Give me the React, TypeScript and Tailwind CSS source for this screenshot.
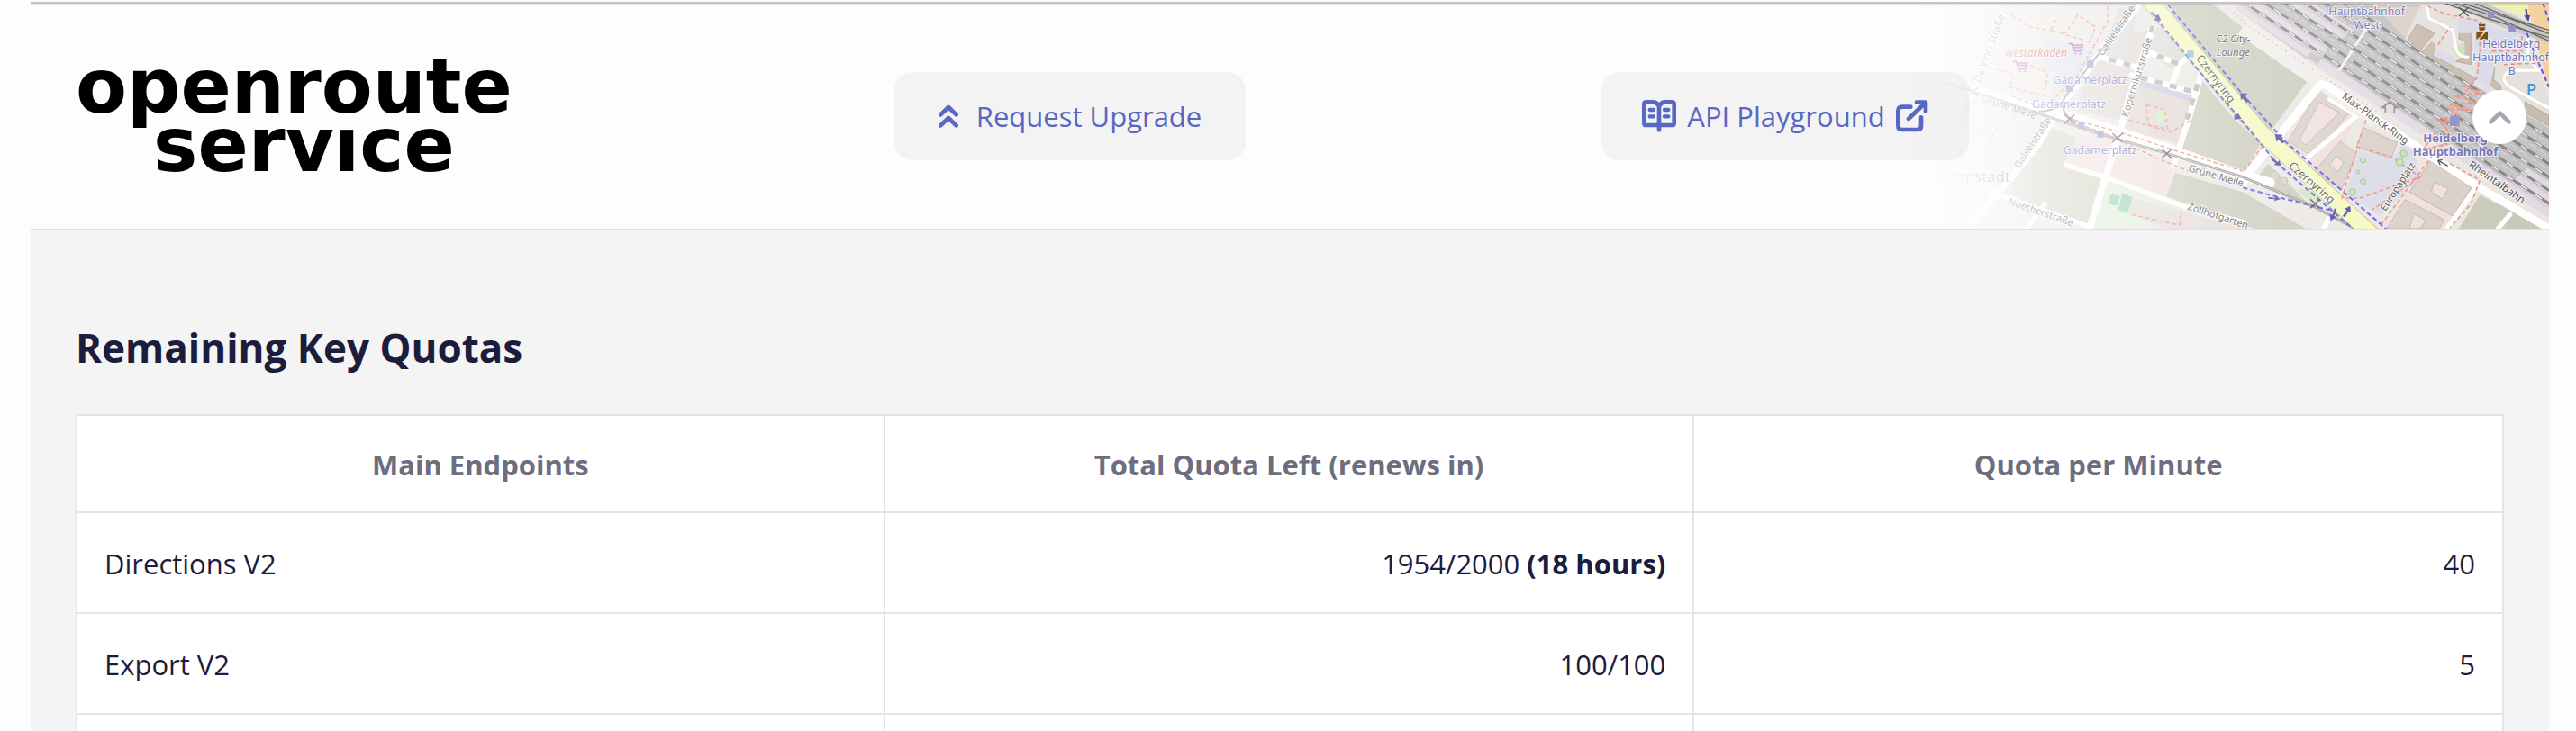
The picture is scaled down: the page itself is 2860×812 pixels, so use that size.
import React from "react";

type Label = { t: string; x: number; y: number; r?: number; c?: string; s?: number; b?: boolean; i?: boolean };

const GREY = "#4c4c4c";
const BLUE = "#6b70b8";

const labels: Label[] = [
  { t: "Westarkaden", x: 421, y: 190, c: "#c9443c", i: true, s: 36 },
  { t: "Gadamerplatz", x: 601, y: 279, c: "#6468c0", s: 37 },
  { t: "Gadamerplatz", x: 531, y: 359, c: "#6468c0", s: 37 },
  { t: "Gadamerplatz", x: 635, y: 513, c: "#6468c0", s: 37 },
  { t: "Da-Vinci-Straße", x: 276, y: 165, r: -70, s: 33 },
  { t: "Da-Vinci-Straße", x: 166, y: 450, r: -70, s: 33 },
  { t: "Galileistraße", x: 698, y: 108, r: -56, s: 33 },
  { t: "Galileistraße", x: 420, y: 482, r: -56, s: 33 },
  { t: "Kopernikusstraße", x: 768, y: 260, r: -73, s: 33 },
  { t: "Grüne Meile", x: 328, y: 367, r: 18, s: 33 },
  { t: "Grüne Meile", x: 1018, y: 596, r: 16, s: 33 },
  { t: "Noetherstraße", x: 434, y: 717, r: 19, s: 33 },
  { t: "Bahnstadt", x: 215, y: 606, c: "#666666", s: 50 },
  { t: "Zollhofgarten", x: 1024, y: 730, r: 18, s: 33 },
  { t: "Czernyring", x: 1010, y: 270, r: 53, s: 37 },
  { t: "C2 City-", x: 1078, y: 141, i: true, s: 34 },
  { t: "Lounge", x: 1078, y: 186, i: true, s: 34 },
  { t: "Hauptbahnhof", x: 1523, y: 51, c: BLUE, s: 37 },
  { t: "West", x: 1523, y: 95, c: BLUE, s: 37 },
  { t: "Heidelberg", x: 2005, y: 160, c: BLUE, s: 37 },
  { t: "Hauptbahnhof", x: 2003, y: 204, c: BLUE, s: 37 },
  { t: "B", x: 2006, y: 248, c: BLUE, s: 37 },
  { t: "Heidelberg", x: 1818, y: 473, c: BLUE, b: true, s: 39 },
  { t: "Hauptbahnhof", x: 1818, y: 519, c: BLUE, b: true, s: 39 },
  { t: "Max-Planck-Ring", x: 1545, y: 404, r: 36, s: 34 },
  { t: "Czernyring", x: 1332, y: 618, r: 41, s: 37 },
  { t: "Europaplatz", x: 1636, y: 628, r: -57, s: 33 },
  { t: "Rheintalbahn", x: 1950, y: 617, r: 35, s: 35 },
];

const tracks = [-76, -32, 12, 56, 100, 144];

const footpaths = [
  "M340 50L400 90L520 110L560 50L620 90L600 140L470 100L490 60",
  "M285 230L350 250L330 290L450 320L460 240L380 210",
  "M340 320L420 350M660 20V70L560 250L470 340",
  "M550 400L700 440L880 500L1110 570",
  "M520 400L640 440L830 530L930 570",
  "M730 400L870 440L940 400M790 350L850 365L860 430L795 415Z",
  "M255 500L290 430L310 400",
  "M740 715L850 740L900 750L905 700",
  "M1520 400L1490 490L1600 520L1700 590L1500 660L1440 660L1490 500",
  "M1700 590L1540 700M1570 750L1740 520M1800 545L1900 600L1870 680L1800 760",
  "M1725 20L1780 45L1900 70V170L1890 260L1840 320",
  "M1940 170L2040 170V120M1980 215L2100 210",
  "M1760 150L1800 90M1115 570L1180 480",
];

const crowds = "M1840 285L1910 310L1815 320L1890 340L1800 350L1880 370L1790 360L1830 385L1780 395L1830 420L1760 400L1800 440L1740 460L1790 480L1710 500L1760 430";

function MapPicture() {
  return (
    <svg viewBox="0 6 2130 756" className="h-full w-full" preserveAspectRatio="xMaxYMid slice" aria-hidden="true">
      <defs>
        <linearGradient id="fade" x1="0" x2="1" y1="0" y2="0">
          <stop offset="0" stopColor="#fdfdfd" />
          <stop offset="0.06" stopColor="#fdfdfd" stopOpacity="0.92" />
          <stop offset="0.28" stopColor="#fdfdfd" stopOpacity="0.54" />
          <stop offset="0.5" stopColor="#fdfdfd" stopOpacity="0.28" />
          <stop offset="0.75" stopColor="#fdfdfd" stopOpacity="0.1" />
          <stop offset="1" stopColor="#fdfdfd" stopOpacity="0" />
        </linearGradient>
        <linearGradient id="edge" x1="0" x2="1" y1="0" y2="0">
          <stop offset="0" stopColor="#fdfdfd" />
          <stop offset="0.16" stopColor="#fdfdfd" stopOpacity="0.3" />
          <stop offset="0.3" stopColor="#fdfdfd" stopOpacity="0" />
        </linearGradient>
        <clipPath id="yard">
          <path d="M1080 6H1540L1650 130L1820 250L2130 425V725L1740 470L1320 195L1090 30Z" />
        </clipPath>
      </defs>
      <rect y="0" width="2130" height="770" fill="#eae6e2" />

      {/* open ground */}
      <g fill="#c9c9b9">
        <path d="M870 6H1000L1330 265L1170 480L1075 330L880 120Z" />
        <path d="M960 250L1075 390L1170 480L1115 570L900 500Z" />
        <path d="M470 425L560 460L510 550L640 590L590 750L310 640Z" fill="#d0d0c0" />
        <path d="M885 575L1110 640L1320 762H1150L855 655Z" />
        <path d="M1195 545L1330 680L1150 600Z" />
        <path d="M1900 650L2130 762H1830Z" />
      </g>
      <path d="M700 20L760 60L740 110L840 90L930 190L870 230L790 160L760 220L640 185Z" fill="#dcd8d4" />
      <path d="M450 125L500 130L640 185L560 270L470 310L490 240L440 220Z" fill="#dcdcec" />
      <path d="M560 450L700 480L880 560L855 655L660 600L520 550Z" fill="#f0dedc" />
      <path d="M570 300L630 200L760 240L700 400L560 370Z" fill="#ddd6d2" />
      <path d="M745 270L940 330L900 480L705 430Z" fill="#dfd4cf" />
      <path d="M770 265L950 320L940 340L765 285Z" fill="#c7c7dc" />
      <path d="M655 620L740 640L900 700L870 750L610 762Z" fill="#dcefd8" />
      <path d="M670 645L702 655L690 685L660 680ZM708 645L744 658L725 712L695 700Z" fill="#8fd0ac" />
      <path d="M740 660L930 710L1110 762H850L730 710Z" fill="#e2dad6" />
      <circle cx="840" cy="385" r="20" fill="#cdebb0" />
      <path d="M200 400L260 410L240 450L190 440ZM160 460L220 480L200 520L150 500Z" fill="none" stroke="#dddddd" strokeWidth="3" />
      <path d="M1290 630L1400 640L1340 680Z" fill="#cfe5bf" />
      <g fill="#d9cfc8" stroke="#c0b4ac" strokeWidth="3">
        <circle cx="1215" cy="587" r="16" />
        <circle cx="1248" cy="603" r="12" />
      </g>

      {/* blocks around the ring road */}
      <path d="M1350 285L1490 385L1440 500L1420 660L1250 500Z" fill="#f0dedc" />
      <path d="M1740 525L1890 620L1800 762H1560Z" fill="#f0dedc" />
      <g fill="#d9cfc8" stroke="#b9aca4" strokeWidth="2.5">
        <path fillRule="evenodd" d="M1370 292L1466 372L1345 523L1260 470ZM1365 340L1432 375L1320 483L1298 468Z" />
        <path fillRule="evenodd" d="M1435 470L1488 510L1440 630L1345 575ZM1420 520L1446 540L1428 572L1398 550Z" />
        <path d="M1512 425L1625 475L1605 528L1488 490Z" />
        <path fillRule="evenodd" d="M1735 535L1872 625L1810 720L1665 640ZM1748 605L1795 630L1775 663L1738 640Z" />
        <path fillRule="evenodd" d="M1650 665L1780 732L1765 762H1590ZM1680 712L1720 735L1700 762H1665Z" />
        <path d="M1560 20L1700 20L1690 70L1650 130L1570 60Z" />
      </g>
      <path d="M1700 20H2000L2060 110L2130 330V430L1900 300L1650 130Z" fill="#e4e0dc" />
      <g fill="#c9bbae" stroke="#b0a196" strokeWidth="2.5">
        <path d="M1690 80L1750 110L1700 170L1660 130Z" />
        <path d="M1750 150L1745 185L1885 260L1870 290L1700 180L1740 140Z" />
        <path d="M1830 105L1870 110V215L1820 205L1850 185V135L1830 130Z" />
        <path d="M1915 210L1950 225L1945 265L1970 285V310L1915 270Z" />
        <path d="M2050 340L2130 385V420L2050 375Z" />
      </g>
      <path d="M1495 500L1610 530L1640 480L1680 500L1700 590L1570 720L1450 650Z" fill="#dadae8" />
      <path d="M1750 160L1820 195L1810 215L1745 185ZM1825 60L1900 65L1960 100L2050 110V190L1950 215L1930 300L1885 260V110H1825Z" fill="#dadae8" />
      <path d="M1805 160L1850 140V190H1825Z" fill="#cfe0b8" />

      {/* streets */}
      <g fill="none" stroke="#ffffff" strokeLinejoin="round" strokeLinecap="round">
        <path d="M90 250L210 300L520 385L700 440L900 510L1110 585L1200 610" strokeWidth="34" />
        <path d="M760 20L620 195L500 360L430 480L300 640L200 750" strokeWidth="22" />
        <path d="M310 50L210 310L110 540" strokeWidth="16" />
        <path d="M810 90L740 300L700 440L600 762" strokeWidth="22" />
        <path d="M970 250L935 380L880 550" strokeWidth="20" />
        <path d="M270 640L440 700L600 755M520 550L650 590L920 690L1110 740M390 762L450 680" strokeWidth="16" />
        <path d="M1110 600L1370 280L1390 285L1560 400L1720 510L1890 620L2130 762" strokeWidth="26" />
        <path d="M1150 560L1110 620M1310 540L1490 385L1400 330M1890 620L1790 762M2000 715L1960 762M1400 720L1380 762" strokeWidth="16" />
        <path d="M1725 20L1730 60L1810 100L1820 160Q1825 190 1860 190M2060 90V190L2090 230M2100 235H2000Q1960 260 2000 290L2130 360" strokeWidth="9" />
        <path d="M640 190L760 225L800 175L900 215L870 290L950 310M740 250L960 310M935 180L900 215" strokeWidth="18" />
      </g>
      <g fill="none" stroke="#b4b0ad" strokeWidth="16" strokeDasharray="24 26">
        <path d="M665 197L760 225" />
        <path d="M825 185L900 215" />
        <path d="M770 258L960 310" />
        <path d="M810 85L790 160" />
        <path d="M960 280L920 410" />
      </g>
      <path d="M1110 90L1340 250L1560 400" fill="none" stroke="#f0ede9" strokeWidth="56" />
      <path d="M1080 40L1120 80L1340 230L1560 375" fill="none" stroke="#b7b3ad" strokeWidth="4" strokeDasharray="4 14" />
      <path d="M1110 600L1370 280L1390 285L1560 400L1720 510" fill="none" stroke="#ffffff" strokeWidth="26" strokeLinejoin="round" />

      {/* railway yard */}
      <g clipPath="url(#yard)">
        <path d="M1060 0H2130V740L1040 40Z" fill="#c3c3c3" />
        <path d="M1060 0H1160L1400 150L1360 215L1090 30ZM1230 0H1330L1480 100L1440 130ZM1320 195L1460 290L2130 740V690L1620 360L1340 170Z" fill="#e4d9e3" />
        <path d="M2060 560L2130 600V700L1990 620Z" fill="#e4d9e3" />
        <g fill="none">
          {tracks.map((y) => (
            <g key={y}>
              <path d={`M1020 ${y - 198}L2140 ${y + 541}`} stroke="#868686" strokeWidth="9" />
              <path d={`M1020 ${y - 198}L2140 ${y + 541}`} stroke="#e8e8e8" strokeWidth="5" strokeDasharray="26 32" />
              <path d={`M1020 ${y - 180}L2140 ${y + 559}`} stroke="#ddd2dc" strokeWidth="4" strokeDasharray="26 12" />
              <path d={`M1020 ${y - 186}L2140 ${y + 553}`} stroke="#b3b0b3" strokeWidth="2" />
            </g>
          ))}
        </g>
      </g>
      <path d="M1528 85L1422 250" stroke="#f4f4f4" strokeWidth="9" strokeDasharray="80 20" />
      <path d="M1585 378V358H1575L1600 340L1625 358H1615V378" fill="none" stroke="#8a8a8a" strokeWidth="5" />

      {/* trunk road in the corner */}
      <path d="M2055 6L2130 300V6Z" fill="#f4d2a0" />
      <path d="M1900 6H2060L2064 60Z" fill="#eef2b2" />
      <path d="M1780 6H1910L2130 105V145L1960 85Z" fill="#c2c2c2" opacity="0.8" />
      <g fill="none" stroke="#666666" strokeWidth="4">
        <path d="M1770 6L1920 60L2130 125" />
        <path d="M1800 6L1940 52L2130 136" />
        <path d="M1830 6L2000 62L2130 112" />
        <path d="M1870 6L2020 66L2130 100" />
      </g>

      {/* tram lines */}
      <g fill="none" stroke="#8c8c8c" strokeWidth="9">
        <path d="M80 262L210 305L430 378L640 448L860 512L1110 590L1350 690L1500 770" />
        <path d="M430 372Q500 370 520 320L700 90L750 20" strokeWidth="6" />
        <path d="M560 405Q510 390 510 345" strokeWidth="6" />
      </g>
      <path d="M430 378L640 448L860 512L1110 590L1350 690L1500 770" fill="none" stroke="#c8c8c8" strokeWidth="3" />

      {/* ring road */}
      <path d="M790 -10L930 155L1075 330L1170 440L1285 545L1550 790" fill="none" stroke="#b9bd86" strokeWidth="56" />
      <path d="M790 -10L930 155L1075 330L1170 440L1285 545L1550 790" fill="none" stroke="#f5f8bd" strokeWidth="51" />
      <g fill="none" stroke="#5a55e0" strokeWidth="6" strokeDasharray="16 10">
        <path d="M860 15L1110 315L1250 470L1590 765" />
        <path d="M805 40L1000 280L1110 405L1220 540L1370 670L1480 765" />
        <path d="M1110 625L1240 660L1400 700" />
        <path d="M2056 110L2100 220L2130 290" />
        <path d="M2110 10L2130 70" />
      </g>
      <g fill="#4a45a0">
        <path d="M815 48L826 52L828 44L838 68L814 68L820 60ZM1082 382L1092 384L1094 376L1106 396L1082 398ZM1102 310L1126 312L1118 322L1132 336L1122 342L1110 328L1104 334Z" />
        <path d="M1217 446L1243 450L1236 458L1250 472L1242 478L1230 466L1222 472ZM1210 526L1226 540L1232 534L1238 552L1214 550L1220 544L1204 532ZM1195 656L1218 660V652L1236 663L1216 670V664L1195 662Z" />
        <path d="M1402 736L1400 712L1408 716L1416 694L1422 698L1414 720L1422 724ZM1443 720L1456 700L1448 696L1468 686L1470 708L1462 704L1450 724Z" />
        <path d="M2050 30L2053 52L2046 52L2062 72L2067 50L2060 51L2057 30Z" />
      </g>

      {/* paths on foot */}
      <g fill="none" stroke="#ee8a7c" strokeWidth="4.5" strokeDasharray="14 9">
        {footpaths.map((d) => (
          <path key={d} d={d} />
        ))}
      </g>
      <path d={crowds} fill="none" stroke="#f0907e" strokeWidth="6" strokeDasharray="16 6" />

      {/* crossings and stops */}
      <g stroke="#4d4d4d" strokeWidth="4" fill="none">
        <path d="M195 290L230 322M230 290L195 322M516 382L550 412M550 382L516 412M676 444L710 474M710 444L676 474M840 496L874 528M874 496L840 528" />
        <path d="M1335 664L1367 694M1367 664L1335 694M1830 24L1862 54M1862 24L1830 54" />
        <path d="M1793 553L1762 535M1775 532L1760 535L1768 550" />
      </g>
      <g fill="#8a90c8">
        <path d="M591 202h22v22h-22zM521 284h22v22h-22zM561 406h22v22h-22zM625 436h22v22h-22z" />
        <path d="M1926 38h22v22h-22zM1996 84h22v22h-22zM1800 388h32v32h-32z" />
      </g>
      <path d="M925 169h22v22h-22z" fill="#86b8e8" />
      <g fill="none" stroke="#a050b0" strokeWidth="5">
        <path d="M530 145H540L550 170H572L577 150H542M546 158H574M345 205H355L365 230H387L392 210H357M361 218H389" />
        <path d="M552 179h2M568 179h2M367 238h2M383 238h2" strokeLinecap="round" />
      </g>
      <g fill="#734a08">
        <path d="M1896 80h22v8h-22zM1896 91h22a11 11 0 0 1-22 0z" />
        <path d="M1888 106H1914L1890 131H1888ZM1920 106H1926V131H1898Z" />
      </g>
      <g fill="#c6e2b0" stroke="#9cc088" strokeWidth="3">
        <circle cx="1511" cy="534" r="9" />
        <circle cx="1633" cy="540" r="12" />
        <circle cx="1646" cy="511" r="11" />
        <circle cx="1494" cy="573" r="6" />
        <circle cx="1511" cy="605" r="9" />
        <circle cx="1475" cy="640" r="11" />
      </g>

      {labels.map((l, n) => (
        <text
          key={n}
          x={l.x}
          y={l.y}
          transform={l.r ? `rotate(${l.r} ${l.x} ${l.y})` : undefined}
          textAnchor="middle"
          fontFamily="'Noto Sans', sans-serif"
          fontSize={l.s}
          fontWeight={l.b ? 700 : 400}
          fontStyle={l.i ? "italic" : "normal"}
          fill={l.c ?? GREY}
          stroke="#ffffff"
          strokeOpacity="0.7"
          strokeWidth="6"
          paintOrder="stroke"
        >
          {l.t}
        </text>
      ))}
      <text x="2071" y="319" textAnchor="middle" fontFamily="'Noto Sans', sans-serif" fontSize="56" fontWeight="500" fill="#3f92d8">
        P
      </text>
      <rect width="2130" height="770" fill="url(#fade)" />
      <rect width="1400" height="770" fill="url(#edge)" />
    </svg>
  );
}

function ChevronsUp() {
  return (
    <svg viewBox="0 0 66 78" className="h-[26px] w-[22px]" fill="none" stroke="currentColor" strokeWidth="14" strokeLinecap="round" strokeLinejoin="round" aria-hidden="true">
      <path d="M7 34L33 9L59 34M7 70L33 45L59 70" />
    </svg>
  );
}

function BookOpen() {
  return (
    <svg viewBox="0 0 114 108" className="h-[36px] w-[38px]" fill="none" stroke="currentColor" strokeLinecap="round" strokeLinejoin="round" aria-hidden="true">
      <path strokeWidth="14" d="M57 20C52 12 44 7 36 7H14Q7 7 7 14V77Q7 84 14 84H100Q107 84 107 77V14Q107 7 100 7H78C70 7 62 12 57 20V100" />
      <path strokeWidth="13" d="M26 33H39M26 55H39M75 33H88M75 55H88" />
    </svg>
  );
}

function ExternalLink() {
  return (
    <svg viewBox="0 0 108 108" className="h-[36px] w-[36px]" fill="none" stroke="currentColor" strokeWidth="14" strokeLinecap="round" strokeLinejoin="round" aria-hidden="true">
      <path d="M49 23H21Q7 23 7 37V86Q7 99 21 99H70Q84 99 84 86V58M42 63L98 9M69 8H99V38" />
    </svg>
  );
}

const rows = [
  { name: "Directions V2", left: "1954/2000", renews: "(18 hours)", minute: "40" },
  { name: "Export V2", left: "100/100", renews: "", minute: "5" },
  { name: "", left: "", renews: "", minute: "" },
];

const th = "h-[108px] border-r-2 border-b-2 border-[#e4e4e4] px-[30px] pt-[3px] text-center font-bold text-[#6d6d80] first:border-l-2";
const td = "h-[112px] border-r-2 border-b-2 border-[#e4e4e4] px-[30px] pt-[3px] first:border-l-2";
const action = "flex items-center rounded-[20px] bg-black/4 py-6 leading-[50px] text-[#5867c3]";

export default function App() {
  return (
    <div className="h-screen overflow-hidden bg-[#fdfdfd] pt-[2px] pr-[30px] pl-[34px] font-['Open_Sans','Noto_Sans',sans-serif] text-[31px] text-[#1c1c3c]">
      <header className="relative border-b-2 border-[#e0e0e0]">
        <div className="absolute inset-y-0 right-0 w-[710px] overflow-hidden">
          <MapPicture />
        </div>
        <div className="relative h-1 border-t-2 border-b-2 border-t-[#c4c4c4] border-b-black/10" />
        <div className="relative grid h-[248px] grid-cols-[707fr_794fr_794fr_401fr] items-center px-[50px] pb-[2px]">
          <a href="#home" aria-label="openroute service" className="flex flex-col font-['DejaVu_Sans',sans-serif] text-[83px] leading-[65px] font-bold text-black">
            <span>openroute</span>
            <span className="pl-[86px]">servıce</span>
          </a>
          <button type="button" className={`${action} gap-[20px] justify-self-center px-[49px]`}>
            <ChevronsUp />
            Request Upgrade
          </button>
          <a href="#playground" className={`${action} gap-[12px] justify-self-center px-[45px]`}>
            <BookOpen />
            API Playground
            <ExternalLink />
          </a>
          <button type="button" aria-label="Back to top" className="absolute right-[25px] flex size-[60px] items-center justify-center rounded-full bg-white text-[#a5a5b4]">
            <svg viewBox="0 0 74 48" className="h-[16px] w-[25px]" fill="none" stroke="currentColor" strokeWidth="14" strokeLinecap="round" strokeLinejoin="round" aria-hidden="true">
              <path d="M7 40L37 11L67 40" />
            </svg>
          </button>
        </div>
      </header>
      <main className="min-h-screen bg-[#f4f4f4] px-[50px] pt-[96px]">
        <h1 className="text-[44px] leading-[68px] font-bold">Remaining Key Quotas</h1>
        <table className="mt-[40px] w-full table-fixed border-separate border-spacing-0 border-t-2 border-[#e4e4e4] bg-white">
          <thead>
            <tr>
              <th className={th}>Main Endpoints</th>
              <th className={th}>Total Quota Left (renews in)</th>
              <th className={th}>Quota per Minute</th>
            </tr>
          </thead>
          <tbody>
            {rows.map((r, n) => (
              <tr key={n}>
                <td className={td}>{r.name}</td>
                <td className={`${td} text-right`}>
                  {r.left} {r.renews && <b>{r.renews}</b>}
                </td>
                <td className={`${td} text-right`}>{r.minute}</td>
              </tr>
            ))}
          </tbody>
        </table>
      </main>
    </div>
  );
}
